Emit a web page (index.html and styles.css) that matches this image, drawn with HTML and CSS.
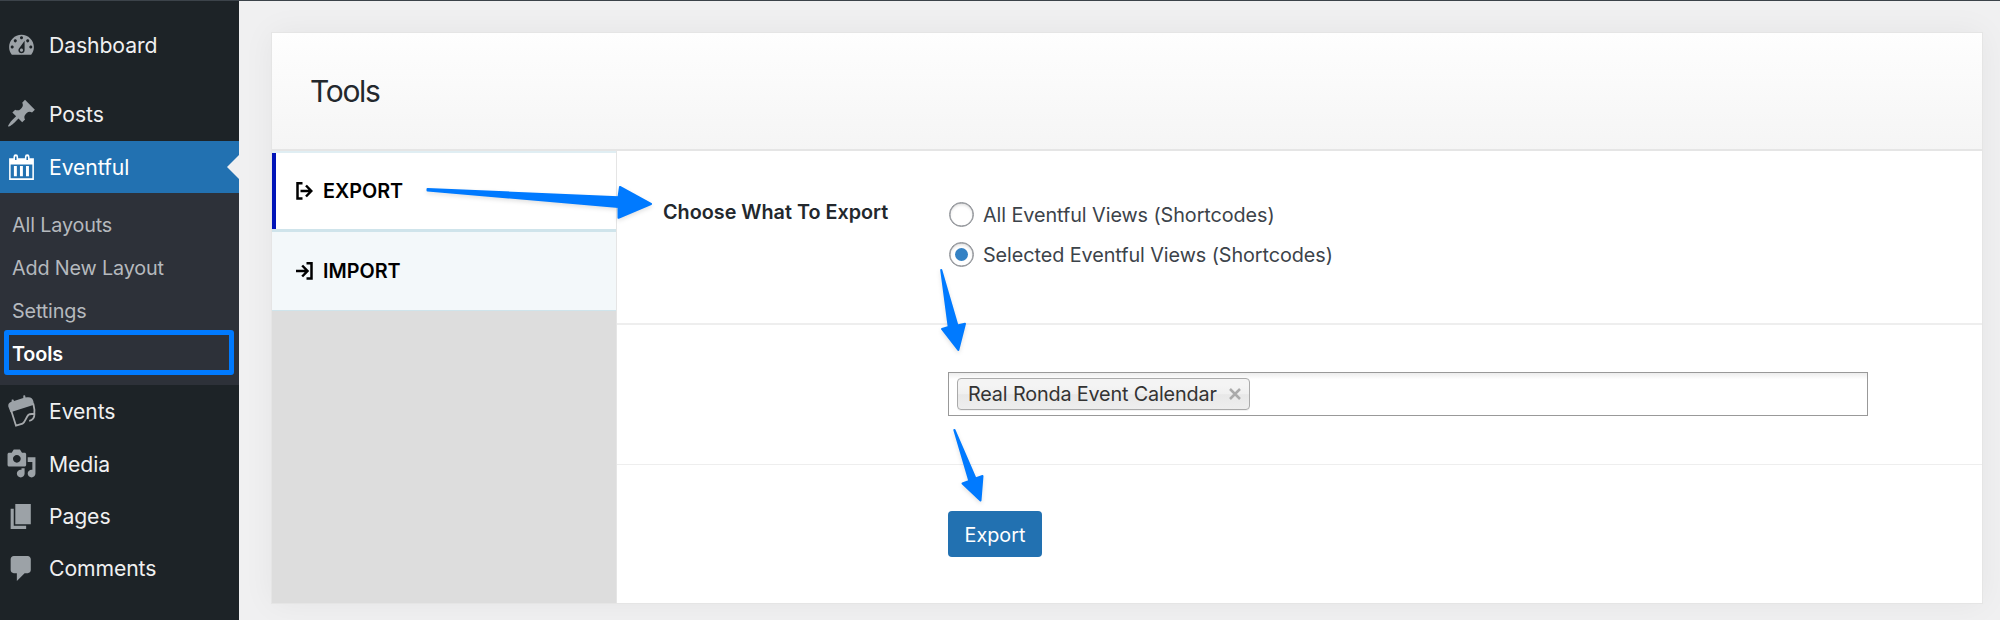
FILE: index.html
```
<!DOCTYPE html>
<html lang="en">
<head>
<meta charset="utf-8">
<title>Tools</title>
<link rel="stylesheet" href="styles.css">
</head>
<body>
<div class="app">
  <nav class="sidebar">
    <a class="item dashboard"><svg class="icon" viewBox="0 0 20 20"><path d="M3.76 16h12.48c1.1-1.37 1.76-3.11 1.76-5 0-4.42-3.58-8-8-8s-8 3.58-8 8c0 1.89.66 3.63 1.76 5zM10 4c.55 0 1 .45 1 1s-.45 1-1 1-1-.45-1-1 .45-1 1-1zM6 6c.55 0 1 .45 1 1s-.45 1-1 1-1-.45-1-1 .45-1 1-1zm8 0c.55 0 1 .45 1 1s-.45 1-1 1-1-.45-1-1 .45-1 1-1zm-5.37 5.55L12 7v6c0 1.1-.9 2-2 2s-2-.9-2-2c0-.57.24-1.08.63-1.45zM4 10c.55 0 1 .45 1 1s-.45 1-1 1-1-.45-1-1 .45-1 1-1zm12 0c.55 0 1 .45 1 1s-.45 1-1 1-1-.45-1-1 .45-1 1-1zm-5 3c0-.55-.45-1-1-1s-1 .45-1 1 .45 1 1 1 1-.45 1-1z"/></svg><span>Dashboard</span></a>
    <a class="item"><svg class="icon" viewBox="0 0 20 20"><path d="M10.44 3.02l1.82-1.82 6.36 6.35-1.83 1.82c-1.05-.68-2.48-.57-3.41.36l-.75.75c-.92.93-1.04 2.35-.35 3.41l-1.83 1.82-2.41-2.41-2.8 2.79c-.42.42-3.38 2.71-3.8 2.29s1.86-3.39 2.28-3.81l2.79-2.79L4.1 9.36l1.83-1.82c1.05.69 2.48.57 3.4-.36l.75-.75c.93-.92 1.05-2.35.36-3.41z"/></svg><span>Posts</span></a>
    <a class="item current"><svg class="icon" viewBox="0 0 20 20"><path fill-rule="evenodd" d="M2 4H4.800V3a1.500 1.500 0 0 1 3 0V4H12.200V3a1.500 1.500 0 0 1 3 0V4H18V18H2ZM3 8V17H17V8ZM5.800 2.900V5.200H6.800V2.900ZM13.200 2.900V5.200H14.200V2.900ZM5.100 9H7V15.700H5.100ZM9 9H10.900V15.700H9ZM12.900 9H14.800V15.700H12.900Z"/></svg><span>Eventful</span></a>
    <div class="submenu">
      <a>All Layouts</a>
      <a>Add New Layout</a>
      <a>Settings</a>
      <a class="active">Tools</a>
    </div>
    <a class="item"><svg class="icon events" viewBox="0 0 28 32"><path d="M.3 11.500C0 9 1 7.600 3.500 6.700L3.800 4.500 5.300 4.600 6 6 15.300 3 15.300.5 17 .2 17.600 2.500C22 1.500 24.500 2.500 25.300 6L26 9.700 2.500 17.300Z"/><path class="line" d="M3.200 15.500 8 30.700 14.500 28.700C17.500 27 18 22 20.500 19.800 22.500 18.500 25 19.500 26.300 18.300 27 15 26 12 25.200 8.500M26.500 18.500C26.500 22.500 24.500 25.300 21.200 25.800"/></svg><span>Events</span></a>
    <a class="item"><svg class="icon" viewBox="0 0 20 20"><path d="M13 11V4c0-.55-.45-1-1-1h-1.67L9 1H5L3.67 3H2c-.55 0-1 .45-1 1v7c0 .55.45 1 1 1h10c.55 0 1-.45 1-1zM7 4.500c1.380 0 2.500 1.120 2.500 2.500S8.380 9.500 7 9.500 4.500 8.380 4.500 7 5.620 4.500 7 4.500zM14 6h5v10.500c0 1.380-1.120 2.500-2.500 2.500S14 17.880 14 16.500s1.120-2.500 2.500-2.500c.17 0 .34.02.5.05V9h-3V6zm-4 8.050V13h2v3.500c0 1.380-1.120 2.500-2.500 2.500S7 17.880 7 16.500 8.120 14 9.500 14c.17 0 .34.02.5.05z"/></svg><span>Media</span></a>
    <a class="item"><svg class="icon" viewBox="0 0 20 20"><path d="M6 15V2h10v13H6zm-1 1h8v2H3V5h2v11z"/></svg><span>Pages</span></a>
    <a class="item"><svg class="icon" viewBox="0 0 20 20"><path d="M5 2h9c1.100 0 2 .9 2 2v7c0 1.100-.9 2-2 2h-2l-5 5v-5H5c-1.100 0-2-.9-2-2V4c0-1.100.9-2 2-2z"/></svg><span>Comments</span></a>
  </nav>
  <main class="content">
    <section class="panel">
      <header class="panel-head"><h1>Tools</h1></header>
      <div class="panel-body">
        <div class="tabs">
          <a class="tab selected"><svg viewBox="0 0 17 18"><path d="M6.500 1.200H1.500V16.600H6.500M4.500 9H15M10 3.500 15.300 9 10 14.500"/></svg><span>EXPORT</span></a>
          <a class="tab"><svg viewBox="0 0 17 18"><path d="M10.500 1.200H15.500V16.600H10.500M0 9H11M6.200 3.500 11.500 9 6.200 14.500"/></svg><span>IMPORT</span></a>
        </div>
        <div class="fields">
          <div class="row choose">
            <span class="label">Choose What To Export</span>
            <div class="options">
              <label><i class="radio"></i><span>All Eventful Views (Shortcodes)</span></label>
              <label><i class="radio on"></i><span>Selected Eventful Views (Shortcodes)</span></label>
            </div>
          </div>
          <div class="row pick">
            <div class="select"><span class="tag"><span>Real Ronda Event Calendar</span><svg viewBox="0 0 12 12"><path d="M1 1 11 11M11 1 1 11"/></svg></span></div>
          </div>
          <div class="row submit"><button><span>Export</span></button></div>
        </div>
      </div>
    </section>
  </main>
</div>
<svg class="arrows" viewBox="0 0 2000 620">
  <path d="M427.500 189 618.500 197.200 620 187 651 204 618.500 217.800 618.500 207 427.500 190.500Z"/>
  <path d="M941.300 270 957.500 325.500 965 323.800 958.300 350 942 329 948.700 327 941.200 270Z"/>
  <path d="M954.500 430 975.500 478.500 982.500 476 980.500 500.500 962.500 483.500 969.300 481 954.300 430Z"/>
</svg>
</body>
</html>
```
FILE: styles.css
```
*, *::before, *::after { box-sizing: border-box; }
body { margin: 0; font-family: Inter, "Liberation Sans", sans-serif; background: #f0f0f1; }
.app { display: flex; height: 620px; border-top: 1px solid #3c434a; overflow: hidden; }
.sidebar { width: 239px; flex: none; background: #1d2327; display: flex; flex-direction: column; }
.item { height: 52.3px; flex: none; display: flex; align-items: center; gap: 12px; padding-left: 6px; color: #f0f0f1; font-size: 21.200px; letter-spacing: -.1px; position: relative; }
.item.dashboard { margin: 18px 0 16.400px; }
.icon { width: 31px; height: 31px; fill: #9ca2a7; }
.icon.events { width: 28px; height: 32px; margin: 0 1px 0 2px; }
.icon .line { fill: none; stroke: #a7aaad; stroke-width: 1.800; }
.current { margin-top: 1px; background: #2271b1; color: #fff; }
.current .icon { fill: #fff; }
.current::after { content: ""; position: absolute; right: 0; top: 14px; border: 12px solid transparent; border-left: 0; border-right-color: #f0f0f1; }
.submenu { background: #2d3139; flex: none; height: 192px; padding: 10px 0 10px 12px; display: flex; flex-direction: column; color: #b5b9be; font-size: 19.800px; letter-spacing: -.15px; }
.submenu a { height: 43px; display: flex; align-items: center; }
.submenu .active { color: #fff; font-weight: 600; position: relative; }
.submenu .active::before { content: ""; position: absolute; left: -8px; top: -2px; width: 230px; height: 45px; border: 5px solid #007aff; border-radius: 3px; }
.content { flex: 1; padding: 31px 17px 0 32px; }
.panel { height: 572px; border: 1px solid #e5e5e5; background: #fff; box-shadow: 0 0 30px rgba(0,0,0,.05); display: flex; flex-direction: column; }
.panel-head { height: 118px; border-bottom: 2px solid #e5e5e5; background: linear-gradient(#fefefe, #f5f5f5); display: flex; align-items: center; padding-left: 38px; }
h1 { margin: 0; font-size: 30px; font-weight: 400; letter-spacing: -1.300px; color: #23282d; }
.panel-body { flex: 1; display: flex; }
.tabs { width: 345px; background: #ddd; border-right: 1px solid #e5e5e5; }
.tab { height: 79px; display: flex; align-items: center; gap: 10px; padding-left: 24px; background: #f3f8fa; border-bottom: 1px solid #cfe4eb; font-weight: 600; font-size: 19.800px; color: #000; }
.tab.selected { height: 81px; background: #fff; border-top: 2px solid #e0eef3; border-bottom: 3px solid #cfe4eb; box-shadow: inset 4px 0 #0014b8; }
.tab svg { width: 17px; height: 18px; fill: none; stroke: #000; stroke-width: 2.500; }
.fields { flex: 1; }
.row { padding-left: 331px; border-bottom: 2px solid #eee; }
.choose { height: 174px; padding: 43px 0 0 46px; display: flex; align-items: flex-start; }
.label { width: 285px; font-weight: 600; font-size: 19.800px; line-height: 36px; color: #23282d; }
.options { display: flex; flex-direction: column; }
.options label { height: 40px; padding-top: 1px; display: flex; align-items: center; gap: 9px; font-size: 19.800px; letter-spacing: -.07px; color: #3c434a; }
.radio { width: 25px; height: 25px; margin-left: 1px; border: 1.500px solid #8c8f94; border-radius: 50%; background: #fff; box-shadow: inset 0 0 0 .5px #8c8f94, inset 0 2px 3px rgba(0,0,0,.12); }
.radio.on { display: grid; place-items: center; }
.radio.on::before { content: ""; width: 13px; height: 13px; border-radius: 50%; background: #3582c4; }
.pick { height: 140px; padding-top: 47px; border-bottom-width: 1px; }
.select { width: 920px; height: 44px; border: 1px solid #999; padding: 5px 8px; background: linear-gradient(#eee 1%, #fff 15%); }
.tag { height: 32px; width: 293px; border: 1px solid #aaa; border-radius: 4px; background: linear-gradient(#f4f4f4 20%, #f0f0f0 50%, #e8e8e8 52%, #eee); display: flex; align-items: center; gap: 12px; padding-left: 10px; color: #333; font-size: 19.800px; letter-spacing: -.15px; box-shadow: 0 1px 0 rgba(0,0,0,.05); }
.tag svg { width: 12px; height: 12px; stroke: #aaa; stroke-width: 2.500; }
.submit { border: 0; padding-top: 46px; }
button { width: 94px; height: 46px; border: 0; border-radius: 4px; background: #2271b1; color: #fff; font: 19.800px Inter, sans-serif; padding: 2px 0 0; }
.arrows { position: absolute; left: 0; top: 0; width: 2000px; height: 620px; fill: #007aff; stroke: #007aff; stroke-width: 2; stroke-linejoin: round; filter: drop-shadow(0 2px 2px rgba(0,0,0,.12)); pointer-events: none; }
```
